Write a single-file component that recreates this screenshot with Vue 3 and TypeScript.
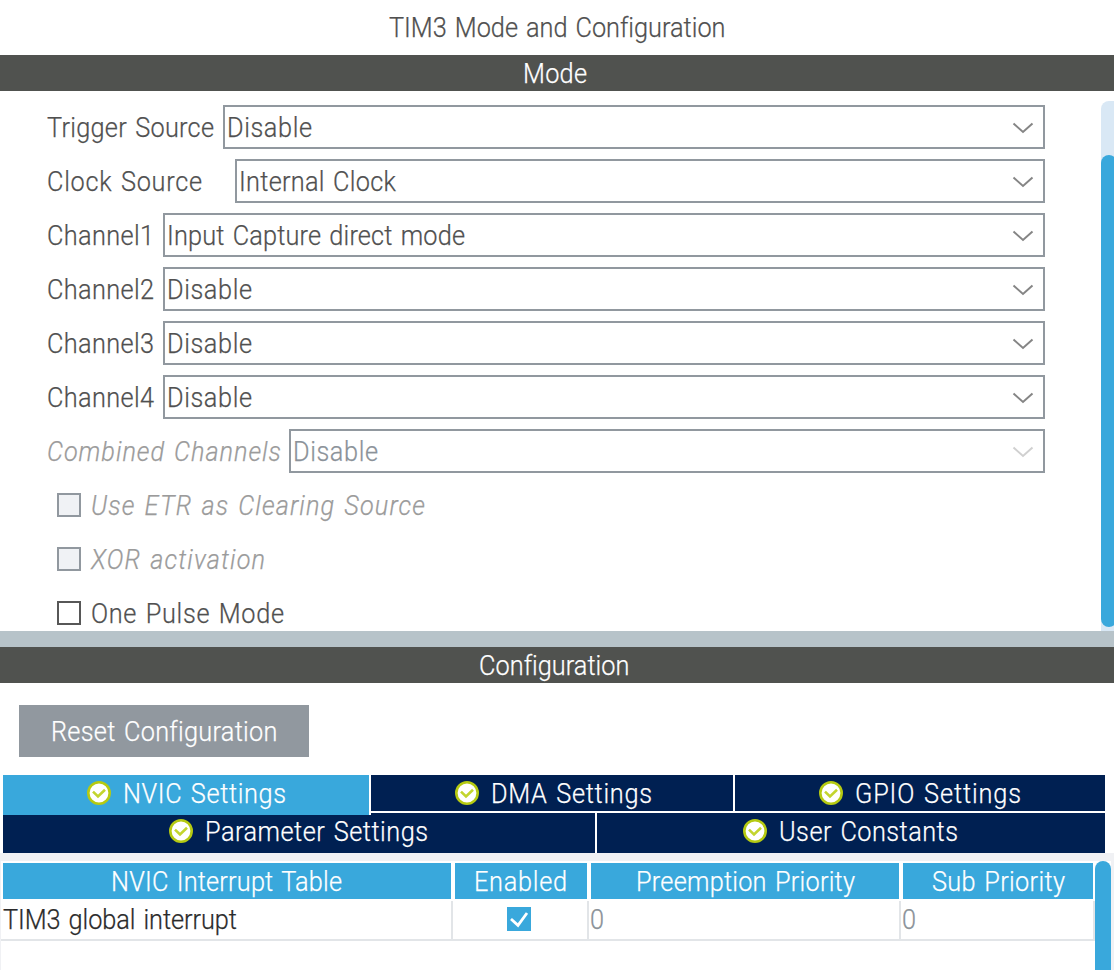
<script setup lang="ts">
import type { Directive } from 'vue'

interface Field { label: string; labelWidth: number; boxClass: string; value: string; valueWidth: number; disabled?: boolean }
interface Check { label: string; width: number; disabled?: boolean }
interface Tab { label: string; width: number; cls: string }

const fields: Field[] = [
  { label: 'Trigger Source', labelWidth: 167, boxClass: 'at-trigger', value: 'Disable', valueWidth: 85 },
  { label: 'Clock Source', labelWidth: 155, boxClass: 'at-clock', value: 'Internal Clock', valueWidth: 157 },
  { label: 'Channel1', labelWidth: 107, boxClass: 'at-channel', value: 'Input Capture direct mode', valueWidth: 298 },
  { label: 'Channel2', labelWidth: 107, boxClass: 'at-channel', value: 'Disable', valueWidth: 85 },
  { label: 'Channel3', labelWidth: 107, boxClass: 'at-channel', value: 'Disable', valueWidth: 85 },
  { label: 'Channel4', labelWidth: 107, boxClass: 'at-channel', value: 'Disable', valueWidth: 85 },
  { label: 'Combined Channels', labelWidth: 234, boxClass: 'at-combined', value: 'Disable', valueWidth: 85, disabled: true },
]
const checks: Check[] = [
  { label: 'Use ETR as Clearing Source', width: 334, disabled: true },
  { label: 'XOR activation', width: 174, disabled: true },
  { label: 'One Pulse Mode', width: 193 },
]
const tabRows: Tab[][] = [
  [
    { label: 'NVIC Settings', width: 163, cls: 'nvic active' },
    { label: 'DMA Settings', width: 161, cls: 'dma' },
    { label: 'GPIO Settings', width: 166, cls: 'gpio' },
  ],
  [
    { label: 'Parameter Settings', width: 223, cls: 'param' },
    { label: 'User Constants', width: 179, cls: 'user' },
  ],
]
const columns = [
  { label: 'NVIC Interrupt Table', width: 231 },
  { label: 'Enabled', width: 93 },
  { label: 'Preemption Priority', width: 219 },
  { label: 'Sub Priority', width: 133 },
]

// Horizontal condensing applied to .t
const CONDENSE = 0.92

// Tracks each condensed label so that it fills its nominal width.
const vFit: Directive<HTMLElement, number> = {
  mounted(el, binding) {
    const count = (el.textContent ?? '').length
    if (count < 2) return
    const natural = el.getBoundingClientRect().width / CONDENSE
    const gap = (binding.value / CONDENSE - natural) / (count - 1)
    el.style.letterSpacing = `${gap}px`
    el.style.marginRight = `${binding.value - natural - gap * count}px`
  },
}
</script>

<template>
  <div class="panel">
    <div class="title"><span v-fit="336" class="t">TIM3 Mode and Configuration</span></div>
    <div class="bar"><span v-fit="64" class="t">Mode</span></div>

    <div class="mode">
      <div class="mode-body">
        <div v-for="f in fields" :key="f.label" class="field" :class="[f.boxClass, { off: f.disabled }]">
          <div class="label"><span v-fit="f.labelWidth" class="t">{{ f.label }}</span></div>
          <div class="select">
            <span v-fit="f.valueWidth" class="t">{{ f.value }}</span>
            <svg class="chev" width="22" height="14" viewBox="0 0 22 14"><path d="M1.5 2.5L11 11L20.5 2.5" /></svg>
          </div>
        </div>
        <div v-for="c in checks" :key="c.label" class="check" :class="{ off: c.disabled }">
          <i class="box"></i><span v-fit="c.width" class="t">{{ c.label }}</span>
        </div>
      </div>
      <div class="track"><div class="thumb"></div></div>
    </div>

    <div class="divider"></div>
    <div class="bar"><span v-fit="150" class="t">Configuration</span></div>

    <div class="actions"><button class="reset"><span v-fit="226" class="t">Reset Configuration</span></button></div>

    <div class="tabs">
      <div v-for="(row, i) in tabRows" :key="i" class="tab-row">
        <div v-for="tab in row" :key="tab.label" class="tab" :class="tab.cls">
          <svg class="ok" width="24" height="24" viewBox="0 0 24 24">
            <circle cx="12" cy="12" r="10.7" fill="#fff" stroke="#b5ca12" stroke-width="2.6" />
            <path d="M6 10.6L11 15.4L18 8.8" fill="none" stroke="#c3d52e" stroke-width="2.6" />
          </svg>
          <span v-fit="tab.width" class="t">{{ tab.label }}</span>
        </div>
      </div>
    </div>

    <div class="band"></div>
    <div class="table-wrap">
      <div class="table">
        <div class="grid head">
          <div v-for="c in columns" :key="c.label" class="th"><span v-fit="c.width" class="t">{{ c.label }}</span></div>
        </div>
        <div class="grid line">
          <div class="td name"><span v-fit="234" class="t">TIM3 global interrupt</span></div>
          <div class="td mid">
            <svg width="24" height="24" viewBox="0 0 24 24"><rect width="24" height="24" fill="#39a8dc" /><path d="M4 12L11 18.3L20 6" fill="none" stroke="#fff" stroke-width="2.8" /></svg>
          </div>
          <div class="td num"><span class="t">0</span></div>
          <div class="td num"><span class="t">0</span></div>
        </div>
      </div>
      <div class="side"><div class="side-thumb"></div></div>
    </div>
  </div>
</template>

<style>
body { margin: 0; overflow: hidden; background: #fff; }
</style>

<style scoped>
.panel {
  width: 1114px; height: 970px; overflow: hidden; background: #fff; color: #505050;
  font-family: Roboto, "Liberation Sans", sans-serif; font-size: 27.5px; font-weight: 300; word-spacing: 2px;
  -webkit-text-stroke: 0.25px currentColor;
  box-sizing: border-box; display: flex; flex-direction: column;
}
.panel * { box-sizing: border-box; }
.t { display: inline-block; white-space: pre; line-height: 38px; height: 38px; flex: none; transform: scaleX(0.92); transform-origin: left; }
.title { height: 55px; flex: none; display: flex; justify-content: center; padding-top: 9px; }
.bar { height: 36px; flex: none; background: #50524f; color: #fff; display: flex; justify-content: center; padding-right: 5px; }
.mode { height: 540px; flex: none; display: flex; justify-content: space-between; overflow: hidden; }
.mode-body { width: 1045px; padding: 14px 0 0 47px; }
.field { height: 44px; margin-bottom: 10px; display: grid; }
.at-trigger { grid-template-columns: 176px 1fr; }
.at-clock { grid-template-columns: 188px 1fr; }
.at-channel { grid-template-columns: 116px 1fr; }
.at-combined { grid-template-columns: 242px 1fr; }
.label { padding-top: 4px; }
.select { border: 2px solid #91989f; padding: 2px 9px 0 2px; display: flex; justify-content: space-between; }
.chev { flex: none; margin-top: 12px; }
.chev path { fill: none; stroke: #858585; stroke-width: 2; }
.off .label, .check.off { color: #9b9b9b; font-style: italic; }
.off .select { color: #8b9299; }
.off .chev path { stroke: #d0d0d0; }
.check { height: 44px; margin-bottom: 10px; display: flex; padding: 4px 0 0 10px; }
.box { width: 24px; height: 24px; margin: 6px 10px 0 0; border: 2px solid #575757; }
.off .box { border-color: #91989f; background: #f0f2f5; }
.track { width: 13px; height: 530px; margin-top: 10px; overflow: hidden; background: #d9e8f5; border-top-left-radius: 8px; padding-top: 54px; }
.thumb { width: 16px; height: 472px; border-radius: 8px; background: #39a8dc; }
.divider { height: 16px; flex: none; background: #b7c3c9; }
.actions { height: 92px; flex: none; padding: 22px 0 0 19px; }
.reset { width: 290px; height: 52px; border: 0; padding: 2px 0 0; background: #91989f; color: #fff; font: inherit; word-spacing: inherit; display: flex; justify-content: center; align-items: center; }
.tabs { height: 78px; flex: none; padding-left: 3px; width: 1105px; }
.tab-row { display: flex; gap: 2px; height: 38px; }
.tab { height: 36px; background: #002052; color: #fff; display: flex; }
.tab-row + .tab-row .tab { height: 40px; }
.ok { flex: none; margin: 6px 12px 0 0; }
.tab.nvic { width: 366px; padding-left: 84px; }
.tab.active { height: 40px; background: #39a8dc; position: relative; box-shadow: 2px 0 #fff; }
.tab.dma { width: 362px; padding-left: 84px; }
.tab.gpio { width: 370px; padding-left: 84px; }
.tab.param { width: 592px; padding-left: 166px; }
.tab.user { width: 508px; padding-left: 146px; }
.band { height: 8px; flex: none; background: #f0f1f4; }
.table-wrap { flex: 1; display: flex; border-left: 1px solid #f0f1f4; }
.table { width: 1094px; }
.grid { display: grid; grid-template-columns: 452px 136px 312px 194px; }
.head { height: 38px; padding-top: 2px; }
.th { background: #39a8dc; color: #fff; height: 36px; margin: 0 2px; display: flex; justify-content: center; }
.line { height: 42px; padding-top: 2px; border-bottom: 2px solid #e2e5e8; }
.td { height: 38px; border-right: 2px solid #e2e5e8; display: flex; }
.name { color: #2b2b2b; padding-left: 2px; }
.mid { justify-content: center; padding: 6px 2px 0 0; }
.num { color: #8b9299; padding-left: 1px; }
.side { width: 19px; border-right: 3px solid #f0f1f4; }
.side-thumb { height: 130px; border-radius: 8px 8px 0 0; background: #39a8dc; }
</style>
